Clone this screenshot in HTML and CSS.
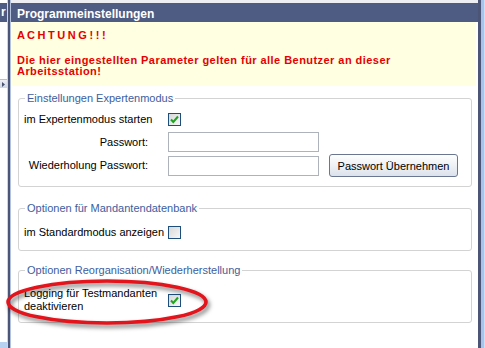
FILE: index.html
```html
<!DOCTYPE html>
<html lang="de">
<head>
<meta charset="utf-8">
<title>Programmeinstellungen</title>
<link rel="stylesheet" href="styles.css">
</head>
<body>
<div class="app">
  <aside class="side">
    <div class="side-head">r</div>
    <div class="side-btn"><svg width="5" height="5" viewBox="0 0 5 5"><path d="M1 0 L4 2.5 L1 5 Z" fill="#4a5470"/></svg></div>
    <div class="side-foot"></div>
  </aside>
  <main class="frame">
    <div class="panel">
      <div class="title">Programmeinstellungen</div>
      <div class="notice">
        <p class="warn">A C H T U N G ! ! !</p>
        <p class="warn-text">Die hier eingestellten Parameter gelten für alle Benutzer an dieser<br>Arbeitsstation!</p>
      </div>
      <div class="content">
        <fieldset class="group g1">
          <legend>Einstellungen Expertenmodus</legend>
          <div class="form">
            <span class="lbl">im Expertenmodus starten</span>
            <span class="cb"><svg width="13" height="13" viewBox="0 0 13 13"><path d="M3 6.5 L5.3 9 L10 3.5" fill="none" stroke="#1fa51f" stroke-width="2"/></svg></span>
            <span></span>
            <span class="lbl right">Passwort:</span>
            <span class="input"></span>
            <span></span>
            <span class="lbl right">Wiederholung Passwort:</span>
            <span class="input"></span>
            <span class="btn">Passwort Übernehmen</span>
          </div>
        </fieldset>
        <fieldset class="group g2">
          <legend>Optionen für Mandantendatenbank</legend>
          <div class="form">
            <span class="lbl">im Standardmodus anzeigen</span>
            <span class="cb"></span>
          </div>
        </fieldset>
        <fieldset class="group g3">
          <legend>Optionen Reorganisation/Wiederherstellung</legend>
          <div class="form">
            <span class="lbl two">Logging für Testmandanten<br>deaktivieren</span>
            <span class="cb"><svg width="13" height="13" viewBox="0 0 13 13"><path d="M3 6.5 L5.3 9 L10 3.5" fill="none" stroke="#1fa51f" stroke-width="2"/></svg></span>
          </div>
        </fieldset>
      </div>
    </div>
  </main>
  <div class="edge"></div>
  <svg class="mark" width="220" height="64" viewBox="0 0 220 64">
    <ellipse cx="107" cy="27" rx="99" ry="21" fill="none" stroke="#e3141b" stroke-width="3.6"/>
  </svg>
</div>
</body>
</html>
```
FILE: styles.css
```css
html, body {
  margin: 0;
  padding: 0;
  background: #ffffff;
}
body {
  font-family: "Liberation Sans", Arial, sans-serif;
  font-size: 11px;
  color: #000;
}
.app {
  position: relative;
  display: flex;
  width: 485px;
  height: 348px;
  overflow: hidden;
}
.side {
  width: 7px;
  border-right: 1px solid #cfd4de;
  padding-top: 3px;
  display: flex;
  flex-direction: column;
  background: #fff;
}
.side-head {
  height: 19px;
  background: #4e5b83;
  color: #fff;
  font-weight: bold;
  font-size: 12px;
  line-height: 19px;
  padding-left: 1px;
  overflow: hidden;
}
.side-btn {
  margin-top: 57px;
  height: 8px;
  background: linear-gradient(#eef0f5, #cfd5e2);
  border-top: 1px solid #b8bfce;
  display: flex;
  align-items: center;
  padding-left: 1px;
}
.side-foot {
  margin-top: auto;
  height: 6px;
  background: #b9d1f1;
}
.frame {
  flex: 1;
  border-left: 2px solid #4d5577;
  border-right: 3px solid #4d5577;
  display: flex;
}
.panel {
  flex: 1;
  border-left: 1px solid #b3c2df;
  padding-top: 3px;
  background: linear-gradient(#eceef4 0 3px, #fff 3px);
}
.title {
  height: 15px;
  padding: 4px 0 0 6px;
  background: #4e5b83;
  color: #fff;
  font-weight: bold;
  font-size: 12px;
  line-height: 15px;
}
.notice {
  margin: 0 2px 0 1px;
  height: 57px;
  padding: 7px 0 0 5px;
  background: #ffffe1;
  color: #e60000;
  font-weight: bold;
  font-size: 11px;
}
.notice p {
  margin: 0;
  line-height: 13px;
}
.notice .warn {
  word-spacing: -0.5px;
}
.notice .warn-text {
  margin-top: 13px;
  line-height: 11px;
  letter-spacing: 0.45px;
}
.content {
  padding: 6px 6px 0 7px;
}
.group {
  margin: 0;
  border: 1px solid #d3d3d3;
  border-radius: 3px;
  padding: 5px 4px 10px 5px;
  min-width: 0;
}
.group legend {
  padding: 0 2px;
  margin-left: 1px;
  color: #3d5d9e;
  line-height: 13px;
  font-size: 11px;
}
.g2 {
  margin-top: 15px;
  padding-top: 8px;
  padding-bottom: 8px;
}
.g3 {
  margin-top: 13px;
  padding-top: 10px;
  padding-bottom: 9px;
}
.form {
  display: grid;
  grid-template-columns: 144px 151px auto;
  grid-auto-rows: 19px;
  row-gap: 3px;
  align-items: center;
}
.g1 .form {
  grid-template-rows: 19px 20px 21px;
}
.g3 .form {
  grid-auto-rows: 26px;
}
.lbl {
  white-space: nowrap;
  line-height: 13px;
}
.lbl.right {
  text-align: right;
  padding-right: 20px;
}
.cb {
  width: 11px;
  height: 11px;
  border: 1px solid #1e4f7c;
  background: linear-gradient(135deg, #d8d8d8, #f7f7f7);
  display: block;
}
.cb svg {
  display: block;
  margin: -1px;
}
.input {
  height: 18px;
  border: 1px solid #aeb3bb;
  background: #fff;
  display: block;
}
.btn {
  margin-left: 10px;
  width: 127px;
  height: 21px;
  border: 1px solid #6b7690;
  border-radius: 3px;
  background: linear-gradient(#fefefe, #f0f2f6 45%, #dce2ec);
  display: flex;
  align-items: center;
  justify-content: center;
  font-size: 11px;
  color: #000;
}
.edge {
  width: 4px;
  background: linear-gradient(90deg, #a7c4ec 0 3px, #cfe0f6 3px);
}
.mark {
  position: absolute;
  left: 0;
  top: 275px;
  filter: drop-shadow(2px 3px 2px rgba(0, 0, 0, 0.5));
}
```
